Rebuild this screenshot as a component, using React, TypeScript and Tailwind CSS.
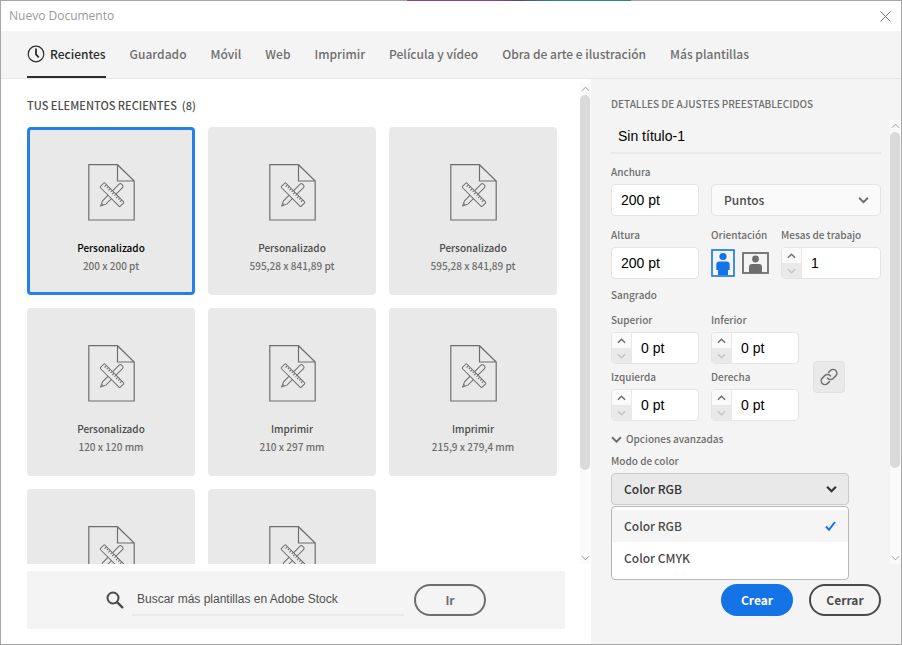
import { useState } from "react";
import type { ReactNode } from "react";

const TABS = [
  "Guardado",
  "Móvil",
  "Web",
  "Imprimir",
  "Película y vídeo",
  "Obra de arte e ilustración",
  "Más plantillas",
];

const RECENTS = [
  { name: "Personalizado", size: "200 x 200 pt" },
  { name: "Personalizado", size: "595,28 x 841,89 pt" },
  { name: "Personalizado", size: "595,28 x 841,89 pt" },
  { name: "Personalizado", size: "120 x 120 mm" },
  { name: "Imprimir", size: "210 x 297 mm" },
  { name: "Imprimir", size: "215,9 x 279,4 mm" },
  { name: "", size: "" },
  { name: "", size: "" },
];

const COLOR_MODES = ["Color RGB", "Color CMYK"];

function Chevron({ className, up = false }: { className: string; up?: boolean }) {
  return (
    <svg className={className} viewBox="0 0 10 6" fill="none" stroke="currentColor">
      <path d={up ? "M1 5l4-4 4 4" : "M1 1l4 4 4-4"} />
    </svg>
  );
}

function DocumentIcon() {
  return (
    <svg className="w-[47px] h-[57px]" viewBox="0 0 47 57" fill="none" stroke="#6e6e6e">
      <path strokeWidth={1.2} d="M.8.7H29.5L46.2 17v39H.8zM29.5.7V17h16.7" />
      <g transform="translate(24 30.7) rotate(-45)">
        <path strokeWidth={1} d="M-16-.1l5-2.3H12.5a1.700 1.700 0 0 1 1.700 1.700v1.400a1.700 1.700 0 0 1-1.700 1.700H-11zM-13.500-1.200v2.200" />
      </g>
      <g transform="translate(24 30.7) rotate(45)">
        <rect x="-14" y="-3.2" width="28" height="6.4" rx="1" fill="#e9e9e9" strokeWidth={1} />
        <path strokeWidth={1} d="M-11-3v2.500M-8.300-3v2M-5.600-3v2.500M-2.900-3v2M-.2-3v2.500M2.500-3v2M5.200-3v2.500M7.900-3v2M10.600-3v2.500" />
      </g>
    </svg>
  );
}

function Scrollbar({ thumb }: { thumb: string }) {
  return (
    <div className="w-[11px] shrink-0 flex flex-col items-center bg-[#fafafa] text-[#8e8e8e]" aria-hidden="true">
      <div className="h-3 flex items-center">
        <Chevron up className="w-[9px] h-[6px]" />
      </div>
      <div className="flex-1 self-stretch">
        <div className={`w-[10px] rounded-full bg-[#dadada] ${thumb}`} />
      </div>
      <div className="h-3 flex items-center">
        <Chevron className="w-[9px] h-[6px]" />
      </div>
    </div>
  );
}

interface FieldProps {
  id: string;
  label: string;
  children: ReactNode;
}

function Field({ id, label, children }: FieldProps) {
  return (
    <div className="flex flex-col gap-1">
      <label htmlFor={id} className="whitespace-nowrap">
        {label}
      </label>
      {children}
    </div>
  );
}

function TextBox({ id, value }: { id: string; value: string }) {
  return (
    <input
      id={id}
      defaultValue={value}
      className="w-[88px] h-8 px-[9px] bg-white border border-[#e4e4e4] rounded font-[Liberation_Sans,Arial,sans-serif] text-sm text-black outline-none"
    />
  );
}

function Stepper({ id, value, wide = false }: { id: string; value: string; wide?: boolean }) {
  return (
    <div className={`${wide ? "w-[100px]" : "w-[88px]"} h-8 flex border border-[#e4e4e4] rounded overflow-hidden bg-white`}>
      <div className="w-5 shrink-0 flex flex-col border-r border-[#e9e9e9]">
        <button className="flex-1 flex items-center justify-center bg-[#fafafa] text-[#6e6e6e]" aria-label="Aumentar">
          <Chevron up className="w-[9px] h-[6px] stroke-[1.6]" />
        </button>
        <button className="flex-1 flex items-center justify-center bg-[#e9e9e9] text-[#c4c4c4]" aria-label="Reducir">
          <Chevron className="w-[9px] h-[6px] stroke-[1.6]" />
        </button>
      </div>
      <input
        id={id}
        defaultValue={value}
        className="flex-1 min-w-0 px-[9px] font-[Liberation_Sans,Arial,sans-serif] text-sm text-black outline-none"
      />
    </div>
  );
}

function Gallery() {
  const [selected, setSelected] = useState(0);

  return (
    <div className="flex-1 min-h-0 flex justify-between pt-1">
      <div className="flex-1 min-w-0 flex flex-col pl-[26px] pr-[23px] overflow-hidden">
        <h2 className="mt-3 mb-3 text-[11px] leading-5 font-medium text-[#4b4b4b]">
          TUS ELEMENTOS RECIENTES&nbsp; (8)
        </h2>
        <div className="flex-1 min-h-0 overflow-hidden">
          <div className="grid grid-cols-3 gap-[13px]">
            {RECENTS.map((item, i) => (
              <button
                key={i}
                onClick={() => setSelected(i)}
                className={`h-[168px] flex flex-col items-center pt-[34px] rounded bg-[#e9e9e9] border-3 text-[10px] font-medium ${
                  i === selected ? "border-[#2680eb] text-black" : "border-transparent text-[#4b4b4b]"
                }`}
              >
                <DocumentIcon />
                <span className="mt-[18px] leading-[18px]">{item.name}</span>
                <span className="leading-[18px] text-[#6e6e6e]">{item.size}</span>
              </button>
            ))}
          </div>
        </div>
      </div>
      <Scrollbar thumb="h-[82%]" />
    </div>
  );
}

function StockSearch() {
  return (
    <form
      className="mx-[26px] mt-[7px] mb-[15px] h-[58px] shrink-0 flex items-center justify-center bg-[#f4f4f4]"
      onSubmit={(e) => e.preventDefault()}
    >
      <svg className="w-[18px] h-[18px] mr-2 text-[#4b4b4b]" viewBox="0 0 18 18" fill="none" stroke="currentColor" strokeWidth={2}>
        <circle cx="7" cy="7" r="5.500" />
        <path strokeLinecap="round" strokeWidth={2.400} d="M11.300 11.300l5 5" />
      </svg>
      <input
        aria-label="Buscar más plantillas en Adobe Stock"
        placeholder="Buscar más plantillas en Adobe Stock"
        className="w-[272px] h-8 px-[5px] border-b-2 border-[#e9e9e9] font-[Liberation_Sans,Arial,sans-serif] text-xs placeholder:text-[#505050] outline-none"
      />
      <button className="ml-[10px] w-[72px] h-8 rounded-full border-2 border-[#6e6e6e] text-xs font-bold text-[#6e6e6e]">
        Ir
      </button>
    </form>
  );
}

function PresetDetails() {
  const [mode, setMode] = useState("Color RGB");
  const [portrait, setPortrait] = useState(true);

  return (
    <aside className="w-[310px] shrink-0 flex flex-col bg-[#f4f4f4] text-[10px] leading-4 font-medium text-[#6e6e6e]">
      <h2 className="pl-5 pt-[15px] pb-[6px] leading-5">DETALLES DE AJUSTES PREESTABLECIDOS</h2>
      <div className="flex-1 min-h-0 flex justify-between">
        <div className="w-[270px] ml-5 flex flex-col">
          <input
            aria-label="Nombre del documento"
            defaultValue="Sin título-1"
            className="h-[34px] px-[7px] border-b-2 border-[#e9e9e9] font-[Liberation_Sans,Arial,sans-serif] text-sm text-black outline-none"
          />
          <div className="mt-[10px] flex items-end gap-3">
            <Field id="width" label="Anchura">
              <TextBox id="width" value="200 pt" />
            </Field>
            <div className="relative flex-1">
              <select
                aria-label="Unidades"
                className="w-full h-8 px-3 appearance-none bg-[#fafafa] border border-[#e4e4e4] rounded text-xs text-[#4b4b4b]"
              >
                <option>Puntos</option>
              </select>
              <Chevron className="absolute right-3 top-3 w-[11px] h-[8px] stroke-[1.800] pointer-events-none" />
            </div>
          </div>
          <div className="mt-[11px] flex gap-3">
            <Field id="height" label="Altura">
              <TextBox id="height" value="200 pt" />
            </Field>
            <div className="flex-1 flex flex-col gap-1">
              <span>Orientación</span>
              <div className="h-8 flex items-center gap-[7px]">
                <button aria-label="Vertical" aria-pressed={portrait} onClick={() => setPortrait(true)} className={portrait ? "text-[#1473e6]" : ""}>
                  <svg className="w-6 h-7" viewBox="0 0 24 28" fill="currentColor">
                    <rect x="1" y="1" width="22" height="26" fill="none" stroke="currentColor" strokeWidth={1.600} />
                    <circle cx="12" cy="7.500" r="3.600" />
                    <path d="M8.500 12.500h7a3.200 3.200 0 0 1 3.200 3.200v5.300H17V26H7v-5H5.300v-5.300a3.200 3.200 0 0 1 3.200-3.200z" />
                  </svg>
                </button>
                <button aria-label="Horizontal" aria-pressed={!portrait} onClick={() => setPortrait(false)} className={portrait ? "" : "text-[#1473e6]"}>
                  <svg className="w-[27px] h-[22px]" viewBox="0 0 27 22" fill="currentColor">
                    <rect x="1" y="1" width="25" height="20" fill="none" stroke="currentColor" strokeWidth={1.800} />
                    <circle cx="13.500" cy="7" r="3.400" />
                    <path d="M10 12h7a3 3 0 0 1 3 3v6H7v-6a3 3 0 0 1 3-3z" />
                  </svg>
                </button>
              </div>
            </div>
            <Field id="artboards" label="Mesas de trabajo">
              <Stepper id="artboards" value="1" wide />
            </Field>
          </div>
          <div className="mt-2">Sangrado</div>
          <div className="mt-[9px] flex items-center gap-[14px]">
            <div className="grid grid-cols-[88px_88px] gap-x-3 gap-y-[5px]">
              <Field id="bleed-top" label="Superior">
                <Stepper id="bleed-top" value="0 pt" />
              </Field>
              <Field id="bleed-bottom" label="Inferior">
                <Stepper id="bleed-bottom" value="0 pt" />
              </Field>
              <Field id="bleed-left" label="Izquierda">
                <Stepper id="bleed-left" value="0 pt" />
              </Field>
              <Field id="bleed-right" label="Derecha">
                <Stepper id="bleed-right" value="0 pt" />
              </Field>
            </div>
            <button aria-label="Enlazar sangrados" className="mt-5 size-8 flex items-center justify-center rounded border border-[#e1e1e1] bg-[#e9e9e9]">
              <svg className="size-[18px]" viewBox="0 0 24 24" fill="none" stroke="currentColor" strokeWidth={2} strokeLinecap="round">
                <path d="M10 13.500a5 5 0 0 0 7.500.5l3.500-3.500a5 5 0 0 0-7.100-7.100L11.500 5.800" />
                <path d="M14 10.500a5 5 0 0 0-7.500-.5L3 13.500a5 5 0 0 0 7.100 7.100l2.400-2.400" />
              </svg>
            </button>
          </div>
          <button className="mt-[10px] flex items-center gap-1">
            <Chevron className="w-[11px] h-[7px] stroke-[1.800]" />
            Opciones avanzadas
          </button>
          <label htmlFor="mode" className="mt-[6px]">
            Modo de color
          </label>
          <div className="relative mt-1 w-[238px] text-xs text-[#4b4b4b]">
            <select
              id="mode"
              value={mode}
              onChange={(e) => setMode(e.target.value)}
              className="block w-full h-8 px-3 appearance-none bg-[#e9e9e9] border border-[#cacaca] rounded text-[#323232]"
            >
              {COLOR_MODES.map((m) => (
                <option key={m}>{m}</option>
              ))}
            </select>
            <Chevron className="absolute right-3 top-3 w-[11px] h-[8px] stroke-[2] text-[#323232] pointer-events-none" />
            <div className="absolute z-10 left-0 top-full mt-px w-full pt-[3px] pb-[5px] bg-white border border-[#b8b8b8] rounded">
              {COLOR_MODES.map((m) => (
                <button
                  key={m}
                  onClick={() => setMode(m)}
                  className={`w-full h-8 px-3 flex items-center justify-between ${m === mode ? "bg-[#f5f5f5]" : ""}`}
                >
                  {m}
                  {m === mode && (
                    <svg className="w-[11px] h-[10px]" viewBox="0 0 11 10" fill="none" stroke="#1473e6" strokeWidth={2}>
                      <path d="M1 5.500l3 3.300L10 1" />
                    </svg>
                  )}
                </button>
              ))}
            </div>
          </div>
        </div>
        <Scrollbar thumb="h-[80%]" />
      </div>
      <div className="mt-5 mb-7 mr-5 flex justify-end gap-4 text-xs font-bold">
        <button className="w-[72px] h-8 rounded-full bg-[#1473e6] text-white">Crear</button>
        <button className="w-[72px] h-8 rounded-full border-2 border-[#4b4b4b] text-[#4b4b4b]">Cerrar</button>
      </div>
    </aside>
  );
}

export default function App() {
  return (
    <div className="h-screen flex flex-col bg-white border border-t-0 border-[#a6a6a6] font-[Noto_Sans_CJK_SC,Open_Sans,sans-serif]">
      <div className="h-px shrink-0 flex justify-center bg-[#a6a6a6] pl-[136px]">
        <div className="w-[224px] bg-linear-to-r from-[#9c3f74] from-35% via-[#4b4a80] via-50% to-[#2a7fa5] to-65%" />
      </div>
      <header className="h-[30px] shrink-0 flex items-center justify-between px-2">
        <h1 className="font-[Open_Sans,sans-serif] text-xs text-[#999999]">Nuevo Documento</h1>
        <button aria-label="Cerrar ventana" className="mr-[2px] text-[#777777]">
          <svg className="size-[11px]" viewBox="0 0 11 11" fill="none" stroke="currentColor">
            <path d="M.5.5l10 10M10.500.5l-10 10" />
          </svg>
        </button>
      </header>
      <nav className="h-12 shrink-0 flex gap-6 pl-[26px] bg-[#f4f4f4] border-b border-[#e6e6e6] text-xs font-medium text-[#6e6e6e]">
        <a href="#" className="flex items-center gap-[5px] border-b-2 border-[#2c2c2c] text-[#2c2c2c]">
          <svg className="size-[18px]" viewBox="0 0 18 18" fill="none" stroke="currentColor">
            <circle cx="9" cy="9" r="7.800" strokeWidth={1.200} />
            <path strokeWidth={1.800} d="M9 3.500v6l2.800 2.800" />
          </svg>
          Recientes
        </a>
        {TABS.map((tab) => (
          <a key={tab} href="#" className="flex items-center border-b-2 border-transparent whitespace-nowrap">
            {tab}
          </a>
        ))}
      </nav>
      <div className="flex-1 min-h-0 flex">
        <main className="flex-1 min-w-0 flex flex-col">
          <Gallery />
          <StockSearch />
        </main>
        <PresetDetails />
      </div>
    </div>
  );
}
